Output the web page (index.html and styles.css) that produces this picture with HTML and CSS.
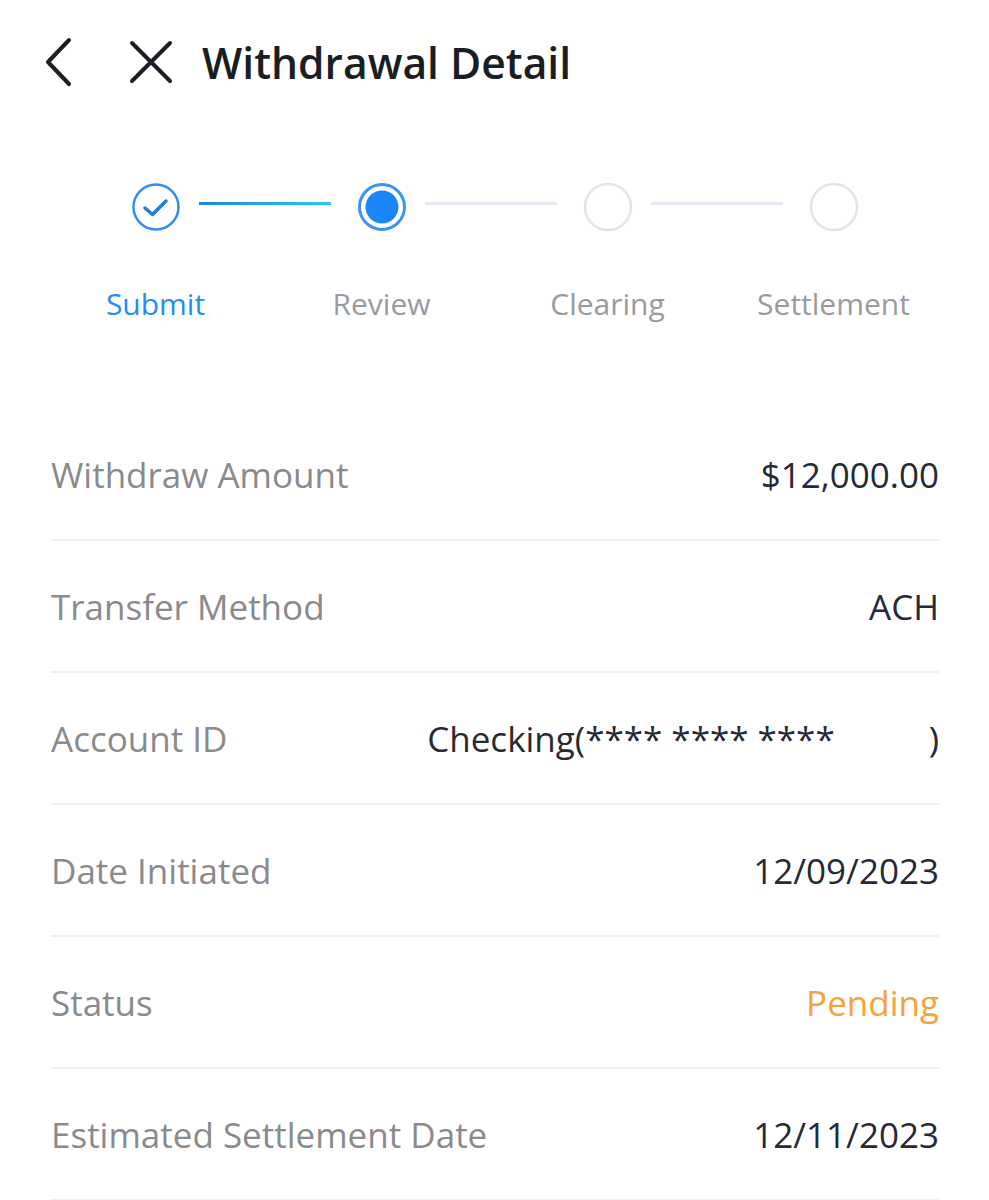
FILE: index.html
```html
<!DOCTYPE html>
<html lang="en">
<head>
    <meta charset="UTF-8">
    <meta name="viewport" content="width=device-width, initial-scale=1.0">
    <title>Withdrawal Detail</title>
    <link rel="stylesheet" href="styles.css">
</head>
<body>

    <!-- Header -->
    <div class="header">
        <a href="#" class="icon-btn back">
            <svg width="28" height="50" viewBox="0 0 28 50"><polyline points="25,3 4,25 25,47" fill="none" stroke="#1b1e25" stroke-width="4" stroke-linecap="round" stroke-linejoin="round"/></svg>
        </a>
        <a href="#" class="icon-btn close">
            <svg width="44" height="44" viewBox="0 0 44 44"><path d="M3 3 L41 41 M41 3 L3 41" fill="none" stroke="#1b1e25" stroke-width="4" stroke-linecap="round"/></svg>
        </a>
        <h1 class="title">Withdrawal Detail</h1>
    </div>

    <!-- Progress Steps -->
    <div class="stepper">
        <div class="step done">
            <svg width="50" height="50" viewBox="0 0 50 50"><circle cx="25" cy="25" r="22.5" fill="none" stroke="#2e8ef2" stroke-width="2.5"/><polyline points="14,26 21.5,32.5 35,19" fill="none" stroke="#1f7fe0" stroke-width="3.5" stroke-linecap="round" stroke-linejoin="round"/></svg>
        </div>
        <div class="line active"></div>
        <div class="step current">
            <svg width="50" height="50" viewBox="0 0 50 50"><circle cx="25" cy="25" r="22.5" fill="none" stroke="#3b93f2" stroke-width="3"/><circle cx="25" cy="25" r="16.5" fill="#1a86f7"/></svg>
        </div>
        <div class="line"></div>
        <div class="step">
            <svg width="50" height="50" viewBox="0 0 50 50"><circle cx="25" cy="25" r="23" fill="none" stroke="#e2e3ee" stroke-width="2.5"/></svg>
        </div>
        <div class="line"></div>
        <div class="step">
            <svg width="50" height="50" viewBox="0 0 50 50"><circle cx="25" cy="25" r="23" fill="none" stroke="#e2e3ee" stroke-width="2.5"/></svg>
        </div>
    </div>

    <div class="step-labels">
        <span class="active">Submit</span>
        <span>Review</span>
        <span>Clearing</span>
        <span>Settlement</span>
    </div>

    <!-- Detail Rows -->
    <div class="details">
        <div class="row">
            <span class="label">Withdraw Amount</span>
            <span class="value">$12,000.00</span>
        </div>
        <div class="row">
            <span class="label">Transfer Method</span>
            <span class="value">ACH</span>
        </div>
        <div class="row">
            <span class="label">Account ID</span>
            <span class="value">Checking(**** **** ****<span class="masked"></span>)</span>
        </div>
        <div class="row">
            <span class="label">Date Initiated</span>
            <span class="value">12/09/2023</span>
        </div>
        <div class="row">
            <span class="label">Status</span>
            <span class="value pending">Pending</span>
        </div>
        <div class="row">
            <span class="label">Estimated Settlement Date</span>
            <span class="value">12/11/2023</span>
        </div>
    </div>

</body>
</html>
```

FILE: styles.css
```css
/* General */
body {
    margin: 0;
    font-family: 'Open Sans', 'Noto Sans', sans-serif;
    background: #ffffff;
    color: #262a35;
}

/* Header */
.header {
    display: flex;
    align-items: center;
    height: 124px;
    padding-left: 44px;
}

.icon-btn {
    display: flex;
    align-items: center;
}

.icon-btn svg {
    display: block;
}

.back {
    margin-right: 57px;
}

.close {
    margin-right: 29px;
}

.title {
    margin: 0;
    font-size: 42.6px;
    font-weight: 600;
    color: #1a1d24;
}

/* Stepper */
.stepper {
    display: flex;
    align-items: center;
    justify-content: center;
    gap: 22px;
    margin-top: 58px;
}

.step svg {
    display: block;
}

.line {
    width: 132px;
    height: 3px;
    margin: 0 4px 7px -4px;
    background: #e6e7f0;
}

.line.active {
    background: linear-gradient(to right, #1c8ad8, #2cc6f0);
}

.step-labels {
    display: grid;
    grid-template-columns: repeat(4, 226px);
    justify-content: center;
    margin-top: 52px;
    font-size: 30px;
    line-height: 40px;
    color: #9a9a9e;
    text-align: center;
}

.step-labels .active {
    color: #1d8ff0;
}

/* Detail Rows */
.details {
    margin-top: 85px;
    padding: 0 50px 0 51px;
}

.row {
    display: flex;
    justify-content: space-between;
    align-items: center;
    height: 130px;
    border-bottom: 2px solid #eef0f3;
    font-size: 35px;
}

.label {
    color: #8a8a8c;
}

.value {
    color: #262a35;
}

.masked {
    display: inline-block;
    width: 94px;
}

.pending {
    color: #f7a23a;
}
```
